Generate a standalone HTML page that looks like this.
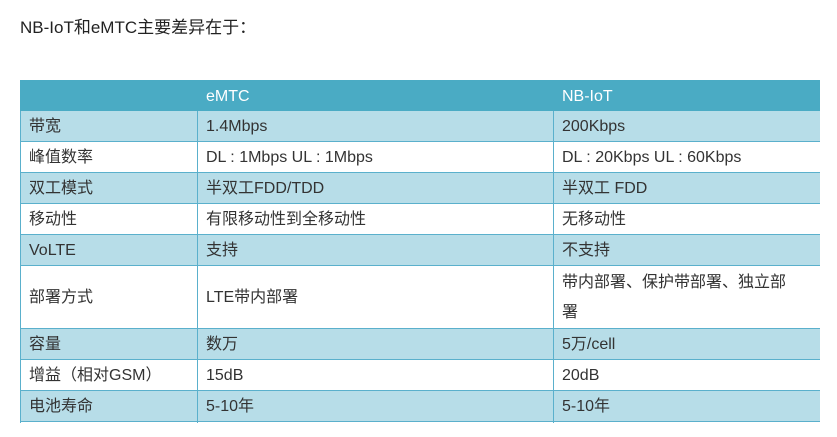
<!DOCTYPE html>
<html><head><meta charset="utf-8"><style>
body{margin:0;background:#fff;width:837px;height:437px;overflow:hidden;font-family:"Liberation Sans","Noto Sans CJK SC",sans-serif;}
.t{position:absolute;left:20px;top:13px;font-size:17px;color:#222;}
.wrap{position:absolute;left:20px;top:80px;width:800px;height:343px;overflow:hidden;}
table{border-collapse:collapse;width:800px;table-layout:fixed;font-size:16px;color:#333;}
td{border:1px solid #5ab0cc;padding:2px 0 0 8px;height:28px;vertical-align:middle;white-space:nowrap;line-height:20px;}
tr.h td{background:#4aabc4;color:#fff;border-color:#4aabc4;height:27px;font-size:16px;}
tr.b td{background:#b7dde8;}
tr.w td{background:#fff;}
</style></head><body>
<div class="t">NB-IoT和eMTC主要差异在于：</div>
<div class="wrap"><table>
<col style="width:177px"><col style="width:356px"><col style="width:267px">
<tr class="h"><td></td><td>eMTC</td><td>NB-IoT</td></tr>
<tr class="b"><td>带宽</td><td>1.4Mbps</td><td>200Kbps</td></tr>
<tr class="w"><td>峰值数率</td><td>DL : 1Mbps UL : 1Mbps</td><td>DL : 20Kbps UL : 60Kbps</td></tr>
<tr class="b"><td>双工模式</td><td>半双工FDD/TDD</td><td>半双工 FDD</td></tr>
<tr class="w"><td>移动性</td><td>有限移动性到全移动性</td><td>无移动性</td></tr>
<tr class="b"><td>VoLTE</td><td>支持</td><td>不支持</td></tr>
<tr class="w"><td style="height:59px">部署方式</td><td>LTE带内部署</td><td style="line-height:30px">带内部署、保护带部署、独立部<br>署</td></tr>
<tr class="b"><td>容量</td><td>数万</td><td>5万/cell</td></tr>
<tr class="w"><td>增益（相对GSM）</td><td>15dB</td><td>20dB</td></tr>
<tr class="b"><td>电池寿命</td><td>5-10年</td><td>5-10年</td></tr>
<tr class="w"><td></td><td></td><td></td></tr>
</table></div>
</body></html>
